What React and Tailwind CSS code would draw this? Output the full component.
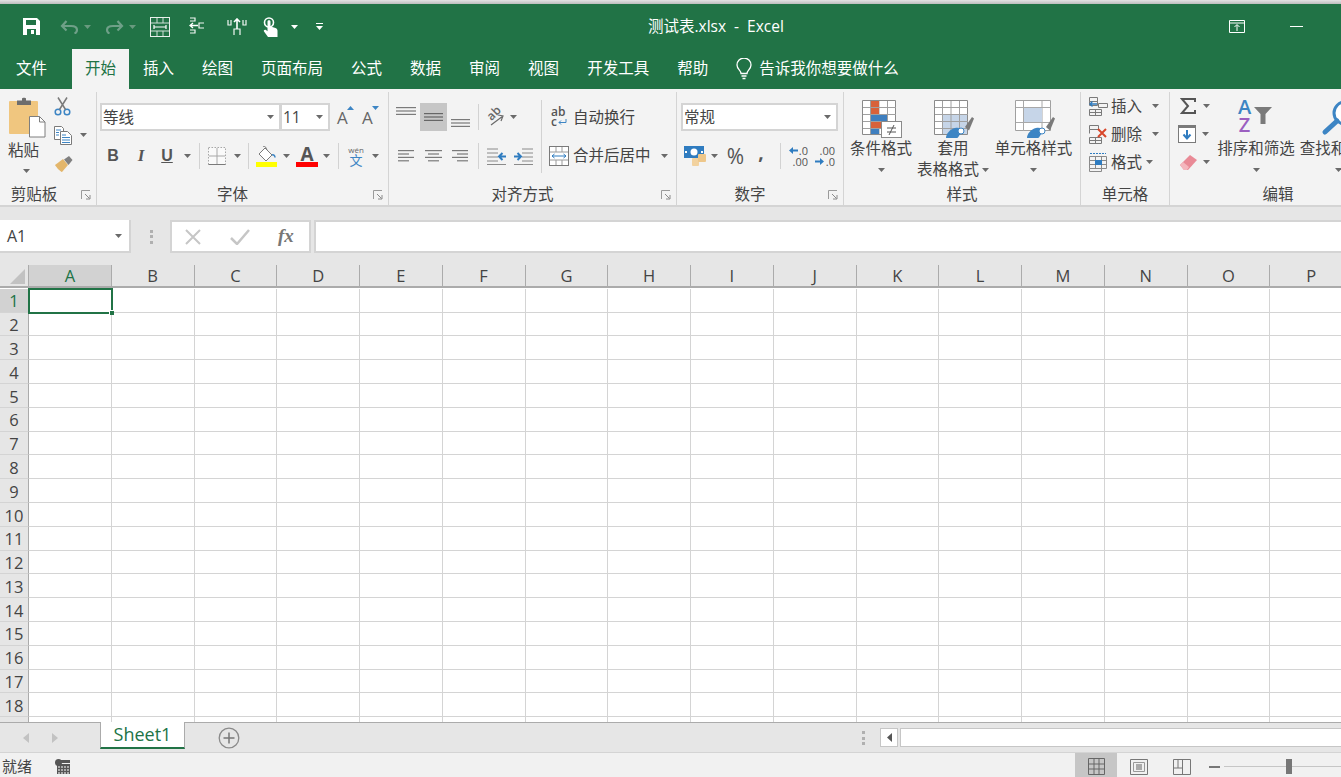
import React from 'react';

const COLUMNS = ['A', 'B', 'C', 'D', 'E', 'F', 'G', 'H', 'I', 'J', 'K', 'L', 'M', 'N', 'O', 'P'];
const ROWS = Array.from({ length: 19 }, (_, i) => i + 1);
const TABS = ['插入', '绘图', '页面布局', '公式', '数据', '审阅', '视图', '开发工具', '帮助'];

// small drop-down arrow used all over the ribbon
const Caret = ({ className = '' }) => (
  <svg width="7" height="4" viewBox="0 0 7 4" className={`shrink-0 ${className}`}>
    <path d="M0 0h7L3.5 4z" fill="#6a6a6a" />
  </svg>
);

const Sep = ({ className = '' }) => <div className={`w-px h-[26px] shrink-0 bg-[#d2d2d2] ${className}`} />;

const Svg = ({ w, h, className = '', children }) => (
  <svg width={w} height={h} viewBox={`0 0 ${w} ${h}`} fill="none" className={`shrink-0 ${className}`}>
    {children}
  </svg>
);

const Launcher = () => (
  <svg width="10" height="10" viewBox="0 0 10 10" fill="none" className="absolute right-[5px] top-[6px]">
    <path d="M9 .5H.5V9" stroke="#9a9a9a" />
    <path d="M4 4l4.5 4.5M5 9h4V5" stroke="#8a8a8a" />
  </svg>
);

const Group = ({ label, labelClass = '', launcher, className = '', children }) => (
  <section className={`flex flex-col shrink-0 h-[113px] mt-[3px] border-r border-[#d4d4d4] ${className}`}>
    <div className="h-[92px] shrink-0 flex">{children}</div>
    <div className={`relative flex justify-center leading-[20px] ${labelClass}`}>
      {label}
      {launcher && <Launcher />}
    </div>
  </section>
);

const AlignLines = ({ w, widths, top = 0, align = 'left', color = '#7a7a7a', className = '' }) => (
  <Svg w={w} h={16} className={className}>
    {widths.map((lw, i) => {
      const x = align === 'left' ? 0 : align === 'right' ? w - lw : (w - lw) / 2;
      return <rect key={i} x={x} y={top + i * 3.4} width={lw} height="1.2" fill={color} />;
    })}
  </Svg>
);

const SaveIcon = () => (
  <Svg w={17} h={17} className="ml-[23px]">
    <path d="M0 0h14l3 3v14H0z" fill="#fff" />
    <rect x="3" y="2" width="10" height="5" fill="#217346" />
    <rect x="4" y="11" width="9" height="6" fill="#217346" />
    <rect x="8" y="12" width="3" height="4" fill="#fff" />
  </Svg>
);

const UndoIcon = ({ flip, className = '' }) => (
  <Svg w={19} h={14} className={`${flip ? '-scale-x-100' : ''} ${className}`}>
    <path d="M2 6h9c3.500 0 6 1.500 6 4 0 1.500-1 3-2.500 3.500" stroke="#6fa088" strokeWidth="2.200" />
    <path d="M6.500 1L2 6l4.500 4.500" stroke="#6fa088" strokeWidth="2.200" />
  </Svg>
);

const MergeQatIcon = () => (
  <Svg w={20} h={20} className="ml-[14px]">
    <rect x=".5" y=".5" width="19" height="19" stroke="#e8f0ec" />
    <path d="M1 6h18M1 14h18M7 1v5M13 1v5M7 14v5M13 14v5" stroke="#cfe0d7" />
    <path d="M4 10h12M4 8v4M16 8v4" stroke="#fff" strokeWidth="1.200" />
  </Svg>
);

const TraceIcon = () => (
  <Svg w={16} h={19} className="ml-[19px]">
    <path d="M1 1h5v3H1M1 16h5v-3H1M15 6H10v5h5" stroke="#f2f7f4" strokeWidth="1.200" />
    <path d="M9 8.500H1M4 6L1 8.500 4 11" stroke="#fff" strokeWidth="1.400" />
  </Svg>
);

const SplitIcon = () => (
  <Svg w={20} h={18} className="ml-[22px]">
    <path d="M1 2v5h3V2M16 2v5h3V2M7 17v-6h6v6" stroke="#f2f7f4" strokeWidth="1.200" />
    <path d="M10 11V1M7 4l3-3 3 3" stroke="#fff" strokeWidth="1.600" />
  </Svg>
);

const TouchIcon = () => (
  <Svg w={15} h={20} className="ml-[16px]">
    <circle cx="6" cy="5.500" r="4.500" stroke="#fff" strokeWidth="1.600" />
    <path d="M4.500 4.500c0-1.800 3-1.800 3 0v5l5 1.500c1.500.5 2 1.500 2 3V20H5L1 14.500c-.8-1.300.8-2.500 2-1.500l1.500 1.300z" fill="#fff" />
  </Svg>
);

const PasteIcon = () => (
  <Svg w={37} h={41}>
    <rect y="4" width="29" height="33" rx="1" fill="#f0c67f" />
    <path d="M8 8V3.500h5V1.500c0-1 4-1 4 0v2h5V8z" fill="#6d6d6d" />
    <path d="M20.500 19.500h10l5.500 5.500v15H20.500z" fill="#fff" stroke="#7e7e7e" />
    <path d="M30.500 19.500V25H36" stroke="#7e7e7e" />
  </Svg>
);

const ScissorsIcon = () => (
  <Svg w={17} h={19} className="ml-[6px]">
    <circle cx="4" cy="15" r="2.800" stroke="#3d85c4" strokeWidth="1.500" />
    <circle cx="13" cy="15" r="2.800" stroke="#3d85c4" strokeWidth="1.500" />
    <path d="M5.500 12.500L13 .5M11.500 12.500L4 .5" stroke="#7a7a7a" strokeWidth="1.500" />
  </Svg>
);

const CopyIcon = () => (
  <Svg w={18} h={19} className="ml-[6px]">
    <path d="M.5.5h7l2 2v11H.5z" fill="#fff" stroke="#7a7a7a" />
    <path d="M6.500 5.500h7l4 4v9h-11z" fill="#fff" stroke="#7a7a7a" />
    <path d="M2 4h5M2 6.500h3M2 9h3M8 9h4M8 11.500h8M8 14h8M8 16.500h8" stroke="#3d85c4" />
  </Svg>
);

const BrushIcon = () => (
  <Svg w={18} h={16} className="ml-[7px]">
    <path d="M0 9l8-6 5 6-6 7c-2-.5-5-4-7-7z" fill="#e3b66b" />
    <path d="M9 3.500l5-3.500 3.500 4-4 5z" fill="#808080" />
  </Svg>
);

const GrowFont = ({ down, className = '' }) => (
  <div className={`relative w-[16px] h-[18px] shrink-0 text-[17px] leading-[20px] text-[#666] ${className}`}>
    A
    <svg width="7" height="4" viewBox="0 0 7 4" className="absolute -top-[2px] left-[10px]">
      <path d={down ? 'M0 0h7L3.500 4z' : 'M3.500 0L7 4H0z'} fill="#3d85c4" />
    </svg>
  </div>
);

const BorderIcon = () => (
  <Svg w={18} h={18} className="ml-[8px]">
    <rect x="1" y="1" width="16" height="16" fill="#fff" opacity=".6" />
    <path d="M.5.5h17v17H.5z" stroke="#a8a8a8" strokeDasharray="1.500 1.500" />
    <path d="M9 1v16M1 9h16" stroke="#a8a8a8" />
    <path d="M.5 17.500h17" stroke="#7a7a7a" />
  </Svg>
);

const FillIcon = () => (
  <Svg w={21} h={21} className="ml-[7px]">
    <path d="M9 2l7 7-6 6-7-7z" fill="#fff" stroke="#7a7a7a" />
    <path d="M7 1c.5-1 2-1 2.500 0L11 4" stroke="#7a7a7a" />
    <path d="M16 9c1.800-.5 3 .5 3 2.500" stroke="#3d85c4" strokeWidth="1.500" />
    <rect y="16" width="21" height="5" fill="#ffff00" />
  </Svg>
);

const FontColor = () => (
  <div className="w-[22px] ml-[6px] h-[21px] shrink-0 flex flex-col items-center">
    <span className="text-[19px] leading-[16px] font-bold text-[#555]">A</span>
    <div className="w-full h-[5px] bg-[#ff0000]" />
  </div>
);

const Pinyin = () => (
  <div className="w-[20px] ml-[7px] shrink-0 flex flex-col items-center">
    <span className="text-[8px] leading-[9px] text-[#666]">wén</span>
    <span className="text-[13px] leading-[13px] text-[#3d85c4]">文</span>
  </div>
);

const OrientIcon = () => (
  <div className="relative w-[18px] h-[18px] ml-[8px] shrink-0">
    <span className="block -rotate-45 -translate-x-[1px] -translate-y-[3px] text-[12px] leading-[14px] text-[#666] font-semibold">ab</span>
    <svg width="18" height="18" viewBox="0 0 18 18" fill="none" className="absolute left-0 top-0">
      <path d="M4 17L16 8M11 7l5 1-2 5" stroke="#6a6a6a" strokeWidth="1.200" />
    </svg>
  </div>
);

const IndentIcon = ({ flip, className = '' }) => (
  <Svg w={20} h={17} className={`${flip ? '-scale-x-100' : ''} ${className}`}>
    <path d="M9 1h11M9 5h11M9 9h11M9 13h11M1 16.500h19" stroke="#8a8a8a" />
    <path d="M1 8.500h6M4.500 5l3.500 3.500L4.500 12" stroke="#2f7cc0" strokeWidth="2" />
  </Svg>
);

const WrapIcon = () => (
  <div className="w-[17px] ml-[9px] shrink-0 text-[12px] leading-[10px] text-[#555] font-semibold">
    ab
    <div className="flex items-center">
      c
      <svg width="9" height="7" viewBox="0 0 9 7" fill="none" className="ml-px">
        <path d="M8 0v3.500H1M3 1.500L1 3.500l2 2" stroke="#3d85c4" />
      </svg>
    </div>
  </div>
);

const MergeIcon = () => (
  <Svg w={20} h={20} className="ml-[7px]">
    <rect x=".5" y=".5" width="19" height="19" fill="#fff" stroke="#7a7a7a" />
    <path d="M1 6h18M1 14h18M7 1v5M13 1v5M7 14v5M13 14v5" stroke="#9a9a9a" />
    <path d="M3 10h14M5.500 8L3 10l2.500 2M14.500 8L17 10l-2.500 2" stroke="#2f7cc0" />
  </Svg>
);

const AccountIcon = () => (
  <Svg w={22} h={20} className="ml-[7px]">
    <rect width="20" height="12" fill="#2f7cc0" />
    <ellipse cx="10" cy="6" rx="3.500" ry="3.500" fill="#fff" />
    <rect x="1" y="5" width="2" height="2" fill="#fff" />
    <rect x="17" y="5" width="2" height="2" fill="#fff" />
    <rect x="8" y="12" width="7" height="8" rx="1" fill="#f2d29f" />
    <rect x="14" y="8" width="8" height="8" rx="1" fill="#eec78a" />
  </Svg>
);

const DecimalBtn = ({ top, bottom, arrowTop, className = '' }) => (
  <div className={`relative shrink-0 text-[11px] leading-[11px] text-[#555] flex flex-col items-end ${className}`}>
    <span>{top}</span>
    <span>{bottom}</span>
    <svg width="9" height="7" viewBox="0 0 9 7" className={`absolute ${arrowTop ? 'top-[2px] left-0' : 'top-[13px] left-0'}`}>
      <path d={arrowTop ? 'M0 3.500L4 0v2.500h5v2H4V7z' : 'M9 3.500L5 0v2.500H0v2h5V7z'} fill="#2f7cc0" />
    </svg>
  </div>
);

const TableGrid = () => (
  <>
    <path d="M.5.5h33v34H.5z" fill="#fff" stroke="#8a8a8a" />
    <path d="M1 7.500h33M1 14.500h33M1 21.500h33M1 28.500h33M8.500 1v33M17 1v33M25.500 1v33" stroke="#a0a0a0" />
  </>
);

const Roller = () => (
  <>
    <path d="M31 27l7-10 2 1.500-5 12z" fill="#7a7a7a" />
    <path d="M12 38c0-4 4-9 9-10 4-1 8 1 9 3 0 2-4 2-5 5-1 1-1 2-2 2z" fill="#3d85c4" />
    <circle cx="27" cy="31" r="3" fill="#fff" stroke="#3d85c4" />
  </>
);

const CondFormatIcon = () => (
  <Svg w={40} h={38} className="ml-[2px]">
    <TableGrid />
    <rect x="9" y="1" width="8" height="6" fill="#d8623a" />
    <rect x="9" y="8" width="8" height="6" fill="#d8623a" />
    <rect x="9" y="15" width="16" height="6" fill="#3f7fbf" />
    <rect x="9" y="22" width="12" height="6" fill="#d8623a" />
    <rect x="9" y="29" width="8" height="5" fill="#3f7fbf" />
    <rect x="19.500" y="21.500" width="20" height="16" fill="#fff" stroke="#8a8a8a" />
    <path d="M25 28h9M25 32h9M32 25l-5 10" stroke="#555" />
  </Svg>
);

const TableFormatIcon = () => (
  <Svg w={40} h={38} className="ml-[2px]">
    <TableGrid />
    <rect x="9" y="15" width="24" height="19" fill="#c6d5e8" />
    <path d="M9 21.500h24M9 28.500h24M17 15v19M25.500 15v19" stroke="#a0a0a0" />
    <Roller />
  </Svg>
);

const CellStyleIcon = () => (
  <Svg w={40} h={38} className="ml-[2px]">
    <path d="M.5.5h35v30H.5z" fill="#fff" stroke="#a0a0a0" />
    <path d="M1 7.500h35M1 22.500h35M8.500 1v30M27 1v30" stroke="#a8a8a8" />
    <rect x="9" y="8" width="18" height="14" fill="#c6d5e8" />
    <Roller />
  </Svg>
);

const CellsIcon = ({ type }) => (
  <Svg w={19} h={19} className="ml-[8px]">
    {type === 'insert' && (
      <>
        <path d="M.5.5h8v4h-8zM.5 4.500h8v4h-8zM9.500 6.500h9v4h-9zM.5 12.500h12v6H.5zM6.500 12.500v6M.5 15.500h12" stroke="#7a7a7a" />
        <path d="M1 7h7M3.500 4.500L1 7l2.500 2.500" stroke="#2f7cc0" strokeWidth="1.300" />
      </>
    )}
    {type === 'delete' && (
      <>
        <path d="M.5.5h9v4h-9zM.5 4.500v4M.5 12.500h12v6H.5zM6.500 12.500v6M.5 15.500h12" stroke="#7a7a7a" />
        <path d="M9 4l8 8M17 4l-8 8" stroke="#d8472b" strokeWidth="2" />
      </>
    )}
    {type === 'format' && (
      <>
        <path d="M.5 3.500h17v12H.5zM.5 15.500v3h12v-3M6.500 3.500v12M12.500 3.500v12M.5 7.500h17M.5 11.500h17" stroke="#8a8a8a" />
        <rect x="6" y="7" width="7" height="5" fill="#2f7cc0" />
        <path d="M1 .5h16" stroke="#2f7cc0" strokeDasharray="2 1" />
      </>
    )}
  </Svg>
);

const SumIcon = () => (
  <Svg w={16} h={16} className="ml-[10px]">
    <path d="M15 4V1H2l6 7-6 7h13v-3" stroke="#555" strokeWidth="2" />
  </Svg>
);

const FillDownIcon = () => (
  <Svg w={18} h={18} className="ml-[8px]">
    <rect x=".5" y=".5" width="17" height="17" fill="#fff" stroke="#7a7a7a" />
    <rect width="18" height="3" fill="#7a7a7a" />
    <path d="M9 5v8M5.500 9.500L9 13.500l3.500-4" stroke="#2f7cc0" strokeWidth="2" />
  </Svg>
);

const EraserIcon = () => (
  <Svg w={17} h={15} className="ml-[10px]">
    <path d="M0 10L10 0l7 5-9 10H4z" fill="#e98a96" />
    <path d="M0 10l3-3 6 5-2 3H4z" fill="#f4b6bd" />
  </Svg>
);

const SortIcon = () => (
  <div className="flex items-start h-[38px] -mt-[2px] -ml-[2px]">
    <div className="flex flex-col items-center text-[20px] leading-[18px] font-semibold">
      <span className="text-[#3d85c4]">A</span>
      <span className="text-[#9b5fc0]">Z</span>
    </div>
    <svg width="18" height="17" viewBox="0 0 18 17" className="mt-[9px] ml-[3px]">
      <path d="M0 0h18l-6.500 7v10h-5V7z" fill="#7a7a7a" />
    </svg>
  </div>
);

const SearchIcon = () => (
  <Svg w={40} h={40} className="-mt-[2px]">
    <circle cx="26" cy="15" r="11" fill="#fff" stroke="#3d85c4" strokeWidth="3" />
    <path d="M18 23L6 34" stroke="#3d85c4" strokeWidth="5" strokeLinecap="round" />
  </Svg>
);

const BigBtn = ({ icon, first, second, className = '' }) => (
  <div className={`flex flex-col items-center shrink-0 pt-[8px] ${className}`}>
    <div className="h-[38px]">{icon}</div>
    <span className="leading-[21px] whitespace-nowrap">{first}</span>
    <div className="h-[21px] flex items-center whitespace-nowrap">{second}</div>
  </div>
);

const Combo = ({ className, text, caretClass = '' }) => (
  <div className={`h-[28px] shrink-0 bg-white border-2 border-[#d4d4d4] flex items-center justify-between ${className}`}>
    <span className="pl-[1px] pt-[1px]">{text}</span>
    <Caret className={caretClass} />
  </div>
);

const Ribbon = () => (
  <div className="h-[118px] shrink-0 bg-[#f3f3f3] border-b-2 border-[#d4d4d4] flex overflow-hidden text-[15.5px] text-[#444]">
    <Group label="剪贴板" labelClass="pr-[28px]" launcher className="w-[97px]">
      <div className="w-[48px] pl-[9px] pt-[5px] flex flex-col items-start">
        <PasteIcon />
        <span className="-ml-px mt-[2px] leading-[21px]">粘贴</span>
        <Caret className="ml-[14px] mt-[8px]" />
      </div>
      <div className="flex flex-col">
        <div className="h-[28px] flex items-center"><ScissorsIcon /></div>
        <div className="h-[30px] flex items-center">
          <CopyIcon />
          <Caret className="ml-[8px]" />
        </div>
        <div className="h-[28px] flex items-center"><BrushIcon /></div>
      </div>
    </Group>

    <Group label="字体" labelClass="pr-[20px]" launcher className="w-[292px]">
      <div className="flex flex-col pt-[11px] gap-[11px]">
        <div className="flex items-center">
          <Combo className="ml-[3px] w-[181px] pr-[5px]" text="等线" />
          <Combo className="-ml-px w-[50px] pr-[5px]" text="11" />
          <GrowFont className="ml-[7px]" />
          <GrowFont down className="ml-[9px]" />
        </div>
        <div className="flex items-center h-[28px]">
          <span className="w-[28px] ml-[2px] text-center font-['Liberation_Sans',sans-serif] font-bold text-[16px] text-[#555]">B</span>
          <span className="w-[28px] text-center font-['Liberation_Serif',serif] italic font-bold text-[17px] text-[#555]">I</span>
          <span className="w-[24px] text-center font-['Liberation_Sans',sans-serif] font-bold text-[16px] text-[#555] underline">U</span>
          <Caret className="ml-[5px]" />
          <Sep className="ml-[8px]" />
          <BorderIcon />
          <Caret className="ml-[8px]" />
          <Sep className="ml-[7px]" />
          <FillIcon />
          <Caret className="ml-[6px]" />
          <FontColor />
          <Caret className="ml-[5px]" />
          <Sep className="ml-[8px]" />
          <Pinyin />
          <Caret className="ml-[6px]" />
        </div>
      </div>
    </Group>

    <Group label="对齐方式" labelClass="pr-[20px]" launcher className="w-[288px]">
      <div className="w-[152px] flex flex-col pt-[11px] gap-[11px]">
        <div className="flex items-center h-[28px]">
          <AlignLines w={20} widths={[20, 20, 20]} top={1} className="ml-[7px] -mt-[6px]" />
          <div className="ml-[4px] w-[27px] h-[28px] bg-[#c6c6c6] flex items-center justify-center">
            <AlignLines w={19} widths={[19, 19, 19]} top={4} color="#666" />
          </div>
          <AlignLines w={19} widths={[19, 19, 19]} top={8} className="ml-[4px] mt-[4px]" />
          <Sep className="ml-[8px]" />
          <OrientIcon />
          <Caret className="ml-[5px]" />
        </div>
        <div className="flex items-center h-[28px]">
          <AlignLines w={16} widths={[16, 11, 16, 11]} top={2} className="ml-[9px]" />
          <AlignLines w={17} widths={[17, 11, 17, 11]} top={2} align="center" className="ml-[11px]" />
          <AlignLines w={16} widths={[16, 11, 16, 11]} top={2} align="right" className="ml-[10px]" />
          <Sep className="ml-[10px]" />
          <IndentIcon flip className="ml-[8px]" />
          <IndentIcon className="ml-[6px]" />
        </div>
      </div>
      <div className="w-px h-[73px] mt-[8px] shrink-0 bg-[#d2d2d2]" />
      <div className="flex flex-col pt-[11px] gap-[11px]">
        <div className="flex items-center h-[28px]">
          <WrapIcon />
          <span className="ml-[5px] pt-[1px]">自动换行</span>
        </div>
        <div className="flex items-center h-[28px]">
          <MergeIcon />
          <span className="ml-[4px] whitespace-nowrap">合并后居中</span>
          <Caret className="ml-[10px]" />
        </div>
      </div>
    </Group>

    <Group label="数字" labelClass="pr-[20px]" launcher className="w-[167px]">
      <div className="flex flex-col pt-[11px] gap-[11px]">
        <Combo className="ml-[4px] w-[157px] pr-[5px]" text="常规" />
        <div className="flex items-center h-[28px]">
          <AccountIcon />
          <Caret className="ml-[5px]" />
          <span className="w-[19px] ml-[8px] text-center text-[21px] leading-[20px] text-[#555]">%</span>
          <span className="w-[18px] ml-[7px] -mt-[8px] text-center text-[19px] leading-[20px] font-bold text-[#555]">,</span>
          <Sep className="ml-[10px]" />
          <DecimalBtn top=".0" bottom=".00" arrowTop className="ml-[8px] w-[19px]" />
          <DecimalBtn top=".00" bottom=".0" className="ml-[7px] w-[20px]" />
        </div>
      </div>
    </Group>

    <Group label="样式" className="w-[237px]">
      <BigBtn
        className="w-[62px] ml-[6px]"
        icon={<CondFormatIcon />}
        first="条件格式"
        second={<Caret />}
      />
      <BigBtn
        className="w-[72px] ml-[5px]"
        icon={<TableFormatIcon />}
        first="套用"
        second={<>表格格式<Caret className="ml-[3px]" /></>}
      />
      <BigBtn
        className="w-[77px] ml-[6px]"
        icon={<CellStyleIcon />}
        first="单元格样式"
        second={<Caret />}
      />
    </Group>

    <Group label="单元格" className="w-[89px]">
      <div className="flex flex-col">
        <div className="h-[28px] flex items-center">
          <CellsIcon type="insert" />
          <span className="ml-[3px] pt-[1px]">插入</span>
          <Caret className="ml-[10px]" />
        </div>
        <div className="h-[28px] flex items-center">
          <CellsIcon type="delete" />
          <span className="ml-[3px] pt-[1px]">删除</span>
          <Caret className="ml-[10px]" />
        </div>
        <div className="h-[28px] flex items-center">
          <CellsIcon type="format" />
          <span className="ml-[3px] pt-[1px]">格式</span>
          <Caret className="ml-[4px]" />
        </div>
      </div>
    </Group>

    <Group label="编辑" className="w-[216px] border-r-0">
      <div className="w-[47px] shrink-0 flex flex-col">
        <div className="h-[28px] flex items-center"><SumIcon /><Caret className="ml-[7px]" /></div>
        <div className="h-[28px] flex items-center"><FillDownIcon /><Caret className="ml-[6px]" /></div>
        <div className="h-[28px] flex items-center"><EraserIcon /><Caret className="ml-[6px]" /></div>
      </div>
      <BigBtn className="w-[78px]" icon={<SortIcon />} first="排序和筛选" second={<Caret />} />
      <BigBtn className="w-[77px] ml-[5px]" icon={<SearchIcon />} first="查找和选择" second={<Caret />} />
    </Group>
  </div>
);

const FormulaBar = () => (
  <div className="h-[58px] shrink-0 bg-[#e6e6e6] flex items-center pt-[1px] text-[#444]">
    <div className="w-[131px] h-[33px] shrink-0 bg-white border-r-2 border-b-2 border-[#d4d4d4] flex items-center justify-between pl-[7px] pr-[7px] text-[16px]">
      A1
      <Caret />
    </div>
    <div className="w-[3px] h-[14px] shrink-0 ml-[19px] border-y-[3px] border-[#b0b0b0] flex items-center">
      <div className="w-full h-[3px] bg-[#b0b0b0]" />
    </div>
    <div className="w-[141px] h-[33px] shrink-0 ml-[17px] bg-white border-2 border-[#d4d4d4] flex items-center">
      <Svg w={16} h={16} className="ml-[13px]">
        <path d="M1 1l14 14M15 1L1 15" stroke="#c6c6c6" strokeWidth="2" />
      </Svg>
      <Svg w={20} h={16} className="ml-[29px]">
        <path d="M1 9l6 6L19 1" stroke="#c6c6c6" strokeWidth="2.500" />
      </Svg>
      <span className="ml-[28px] font-['Liberation_Serif',serif] italic font-bold text-[19px] text-[#777]">fx</span>
    </div>
    <div className="flex-1 h-[33px] ml-[3px] bg-white border-2 border-r-0 border-[#d4d4d4]" />
  </div>
);

const Sheet = () => (
  <div className="flex-1 min-h-0 overflow-hidden grid grid-cols-[29px_repeat(16,82.75px)] auto-rows-[23.8px] content-start bg-white text-[16.5px] text-[#444]">
    <div className="h-[23px] bg-[#e6e6e6] border-r border-b-2 border-[#ababab] flex items-end justify-end pr-[3px] pb-[2px]">
      <svg width="15" height="15" viewBox="0 0 15 15"><path d="M15 0v15H0z" fill="#c2c2c2" /></svg>
    </div>
    {COLUMNS.map((col, i) => (
      <div
        key={col}
        className={`h-[23px] pt-[2px] border-r border-b-2 border-[#ababab] flex items-center justify-center ${i === 0 ? 'bg-[#d2d2d2] text-[#217346]' : 'bg-[#e6e6e6]'}`}
      >
        {col}
      </div>
    ))}
    {ROWS.map((row) => (
      <React.Fragment key={row}>
        <div className={`h-[23.8px] pt-[3px] border-r border-b border-[#ababab] border-b-[#d4d4d4] flex items-center justify-center ${row === 1 ? 'bg-[#d2d2d2] text-[#217346]' : 'bg-[#e6e6e6]'}`}>
          {row < 19 ? row : ''}
        </div>
        {COLUMNS.map((col) => (
          <div key={col} className="h-[23.8px] relative border-r border-b border-[#d4d4d4]">
            {row === 1 && col === 'A' && (
              <div className="absolute -left-px -top-px w-[85px] h-[26px] border-2 border-[#217346] z-10">
                <div className="absolute -right-[3px] -bottom-[3px] w-[5px] h-[5px] bg-[#217346] border-l border-t border-white" />
              </div>
            )}
          </div>
        ))}
      </React.Fragment>
    ))}
  </div>
);

const SheetTabs = () => (
  <div className="h-[31px] shrink-0 bg-[#e6e6e6] border-t border-b border-[#ababab] border-b-[#d4d4d4] flex items-start">
    <svg width="6" height="10" viewBox="0 0 6 10" className="ml-[23px] mt-[10px]"><path d="M6 0v10L0 5z" fill="#c2c2c2" /></svg>
    <svg width="6" height="10" viewBox="0 0 6 10" className="ml-[23px] mt-[10px]"><path d="M0 0v10l6-5z" fill="#c2c2c2" /></svg>
    <div className="ml-[42px] w-[85px] h-[27px] -mt-px bg-white border-x border-[#ababab] border-b-2 border-b-[#217346] text-center text-[#217346] text-[18px] leading-[24px]">
      Sheet1
    </div>
    <svg width="22" height="22" viewBox="0 0 22 22" fill="none" className="ml-[33px] mt-[4px]">
      <circle cx="11" cy="11" r="9.800" stroke="#8a8a8a" strokeWidth="1.300" />
      <path d="M11 5.500v11M5.500 11h11" stroke="#777" strokeWidth="1.500" />
    </svg>
    <div className="ml-[622px] mt-[8px] w-[3px] h-[14px] border-y-[3px] border-[#b0b0b0] flex items-center">
      <div className="w-full h-[3px] bg-[#b0b0b0]" />
    </div>
    <div className="ml-[15px] mt-[5px] w-[18px] h-[19px] bg-white border border-[#c6c6c6] flex items-center justify-center">
      <svg width="5" height="9" viewBox="0 0 5 9"><path d="M5 0v9L0 4.500z" fill="#555" /></svg>
    </div>
    <div className="ml-[2px] mt-[5px] flex-1 h-[19px] bg-white border border-r-0 border-[#c6c6c6]" />
  </div>
);

const StatusBar = () => (
  <div className="h-[24px] shrink-0 bg-[#f1f1f1] flex items-center text-[#444] text-[15px]">
    <span className="ml-[2px] mt-[3px]">就绪</span>
    <Svg w={15} h={15} className="ml-[23px] mt-[3px]">
      <circle cx="3.500" cy="3.500" r="3.500" fill="#555" />
      <rect x="6" y="1" width="9" height="3" fill="#555" />
      <rect x="2" y="5" width="13" height="10" fill="#555" />
      <path d="M3 8h11M3 11h11M3 14h11" stroke="#fff" strokeDasharray="2 1" />
    </Svg>
    <div className="ml-auto w-[266px] h-full flex items-center shrink-0">
      <div className="w-[42px] h-full bg-[#c6c6c6] flex items-center justify-center pt-[3px]">
        <svg width="17" height="17" viewBox="0 0 17 17" fill="none">
          <path d="M.5.5h16v16H.5zM.5 6h16M.5 11h16M6 .5v16M11 .5v16" stroke="#666" />
        </svg>
      </div>
      <svg width="18" height="16" viewBox="0 0 18 16" fill="none" className="ml-[13px] mt-[3px]">
        <path d="M.5.5h17v15H.5z" stroke="#777" />
        <path d="M3.500 3.500h11v9h-11z" stroke="#999" />
        <rect x="6" y="5" width="6" height="6" fill="#aaa" />
      </svg>
      <svg width="18" height="16" viewBox="0 0 18 16" fill="none" className="ml-[25px] mt-[3px]">
        <path d="M.5.5h17v15H.5zM.5 9h9V.5M5 .5V9M9.500 9v6" stroke="#777" />
      </svg>
      <div className="ml-[18px] mt-[3px] w-[11px] h-[2px] bg-[#777]" />
      <div className="ml-[4px] mt-[3px] flex-1 h-px bg-[#c6c6c6] relative">
        <div className="absolute left-[62px] -top-[7px] w-[6px] h-[15px] bg-[#777]" />
      </div>
    </div>
  </div>
);

const App = () => (
  <div className="w-screen h-screen overflow-hidden flex flex-col bg-white font-['Open_Sans','Noto_Sans_CJK_SC',sans-serif]">
    <div className="h-[4px] shrink-0 bg-gradient-to-b from-[#e4e4e4] to-[#bdbdbd]" />

    {/* title bar */}
    <div className="h-[45px] shrink-0 bg-[#217346] text-white flex items-center">
      <SaveIcon />
      <UndoIcon className="ml-[20px]" />
      <Caret className="ml-[5px] opacity-40 brightness-200" />
      <UndoIcon flip className="ml-[14px]" />
      <Caret className="ml-[5px] opacity-40 brightness-200" />
      <MergeQatIcon />
      <TraceIcon />
      <SplitIcon />
      <TouchIcon />
      <svg width="7" height="4" viewBox="0 0 7 4" className="ml-[13px]"><path d="M0 0h7L3.500 4z" fill="#fff" /></svg>
      <svg width="7" height="7" viewBox="0 0 7 7" className="ml-[18px]"><path d="M0 0h7v1H0zM0 3h7L3.500 7z" fill="#fff" /></svg>
      <span className="ml-[325px] w-[140px] shrink-0 text-[15.5px] whitespace-nowrap flex gap-[8px]">
        <span>测试表.xlsx</span>
        <span>-</span>
        <span>Excel</span>
      </span>
      <svg width="16" height="13" viewBox="0 0 16 13" fill="none" className="ml-[441px]">
        <path d="M.5.5h15v12H.5zM1 3h14" stroke="#fff" />
        <path d="M8 11V5M5.500 7L8 4.500 10.500 7" stroke="#fff" />
      </svg>
      <div className="ml-[45px] w-[13px] h-px bg-white" />
    </div>

    {/* ribbon tabs */}
    <div className="h-[40px] shrink-0 bg-[#217346] text-white text-[15.5px] flex items-center pl-[2px] whitespace-nowrap">
      <span className="px-[14px]">文件</span>
      <span className="ml-[11px] w-[57px] h-full bg-[#f3f3f3] text-[#217346] flex items-center justify-center">开始</span>
      {TABS.map((tab) => (
        <span key={tab} className="px-[14px]">{tab}</span>
      ))}
      <svg width="16" height="22" viewBox="0 0 16 22" fill="none" className="ml-[14px]">
        <path d="M5 15.500c0-3-4-4.500-4-8.500a7 7 0 0114 0c0 4-4 5.500-4 8.500z" stroke="#fff" strokeWidth="1.300" />
        <path d="M5.500 18h5M6.500 20.500h3" stroke="#fff" strokeWidth="1.300" />
      </svg>
      <span className="ml-[7px]">告诉我你想要做什么</span>
    </div>

    <Ribbon />
    <FormulaBar />
    <Sheet />
    <SheetTabs />
    <StatusBar />
  </div>
);

export default App;
